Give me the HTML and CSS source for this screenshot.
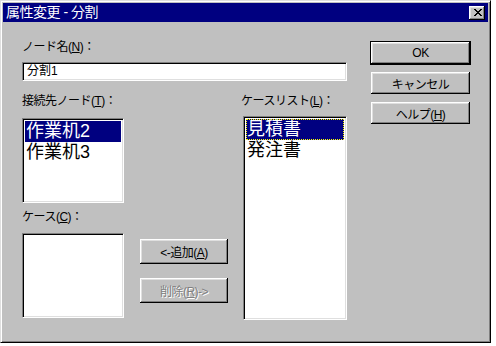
FILE: index.html
```html
<!DOCTYPE html>
<html lang="ja">
<head>
  <meta charset="UTF-8" />
  <title>属性変更 - 分割</title>
  <link rel="stylesheet" href="styles.css">
</head>
<body>
  <div class="dialog">
    <div class="titlebar">
      <span class="title">属性変更 - 分割</span>
      <span class="close" aria-label="閉じる">
        <svg width="8" height="7" viewBox="0 0 8 7">
          <path d="M0 0h2v1h1v1h2v-1h1v-1h2v1h-1v1h-1v1h-1v1h1v1h1v1h1v1h-2v-1h-1v-1h-2v1h-1v1h-2v-1h1v-1h1v-1h1v-1h-1v-1h-1v-1h-1z" fill="#000"/>
        </svg>
      </span>
    </div>

    <div class="body">
      <div class="main">
        <div class="label">ノード名(<u>N</u>)：</div>
        <div class="textbox">分割1</div>

        <div class="lists">
          <div class="col-left">
            <div class="label">接続先ノード(<u>T</u>)：</div>
            <div class="listbox list-nodes">
              <div class="item selected">作業机2</div>
              <div class="item">作業机3</div>
            </div>
            <div class="label label-cases">ケース(<u>C</u>)：</div>
            <div class="listbox list-cases"></div>
          </div>

          <div class="col-mid">
            <button class="btn btn-mid">&lt;-追加(<u>A</u>)</button>
            <button class="btn btn-mid" disabled>削除(<u>R</u>)-&gt;</button>
          </div>

          <div class="col-right">
            <div class="label">ケースリスト(<u>L</u>)：</div>
            <div class="listbox list-all">
              <div class="item selected focused">見積書</div>
              <div class="item">発注書</div>
            </div>
          </div>
        </div>
      </div>

      <div class="buttons">
        <button class="btn default">OK</button>
        <button class="btn">キャンセル</button>
        <button class="btn">ヘルプ(<u>H</u>)</button>
      </div>
    </div>
  </div>
</body>
</html>
```

FILE: styles.css
```css
/* Reset and basics */
* {
  box-sizing: border-box;
}
body {
  margin: 0;
  background: #fff;
  font-family: "Liberation Sans", "Noto Sans CJK JP", sans-serif;
  font-size: 12px;
  color: #000;
}

/* Window frame */
.dialog {
  width: 491px;
  height: 343px;
  background: #c0c0c0;
  border: 1px solid;
  border-color: #dfdfdf #000 #000 #dfdfdf;
  box-shadow: inset 1px 1px #fff, inset -1px -1px #808080;
  padding: 2px;
}

.titlebar {
  height: 19px;
  background: #000080;
  color: #fff;
  display: flex;
  align-items: center;
  justify-content: space-between;
  padding: 0 3px;
}
.title {
  font-size: 14px;
  line-height: 19px;
  letter-spacing: -0.5px;
}
.close {
  width: 16px;
  height: 14px;
  background: #c0c0c0;
  box-shadow: inset -1px -1px #000, inset 1px 1px #fff, inset -2px -2px #808080, inset 2px 2px #dfdfdf;
  display: flex;
  align-items: center;
  justify-content: center;
  padding-left: 1px;
}
.close svg {
  display: block;
}

/* Content */
.body {
  display: flex;
  padding: 18px 0 0 19px;
}
.main {
  width: 325px;
}
.label {
  height: 14px;
  line-height: 14px;
  white-space: nowrap;
  letter-spacing: -0.5px;
}
.textbox {
  margin-top: 8px;
  height: 19px;
  background: #fff;
  border: 1px solid;
  border-color: #808080 #fff #fff #808080;
  box-shadow: inset 1px 1px #000, inset -1px -1px #dfdfdf;
  padding: 1px 0 0 4px;
  line-height: 15px;
}

.lists {
  display: flex;
  margin-top: 13px;
}
.col-left {
  width: 102px;
}
.col-mid {
  width: 88px;
  margin-left: 16px;
  padding-top: 145px;
  display: flex;
  flex-direction: column;
  gap: 14px;
}
.col-right {
  width: 106px;
  margin-left: 13px;
}

.listbox {
  background: #fff;
  border: 1px solid;
  border-color: #808080 #fff #fff #808080;
  box-shadow: inset 1px 1px #000, inset -1px -1px #dfdfdf;
  padding: 2px;
}
.list-nodes {
  margin-top: 10px;
  height: 85px;
}
.label-cases {
  margin-top: 7px;
}
.list-cases {
  margin-top: 9px;
  height: 85px;
}
.list-all {
  margin: 8px 0 0 2px;
  width: 104px;
  height: 204px;
}
.item {
  height: 21px;
  line-height: 21px;
  font-size: 18px;
  padding-left: 1px;
  white-space: nowrap;
}
.item.selected {
  background: #000080;
  color: #fff;
}
.item.focused {
  outline: 1px dotted #ffff00;
  outline-offset: -1px;
}

/* Buttons */
.buttons {
  width: 101px;
  margin: 1px 0 0 23px;
  display: flex;
  flex-direction: column;
  align-items: center;
}
.btn {
  width: 99px;
  height: 22px;
  margin: 0;
  padding: 0;
  font: inherit;
  letter-spacing: -0.5px;
  color: #000;
  background: #c0c0c0;
  border: none;
  box-shadow: inset -1px -1px #000, inset 1px 1px #fff, inset -2px -2px #808080, inset 2px 2px #dfdfdf;
}
.btn.default {
  width: 101px;
  height: 24px;
  border: 1px solid #000;
  margin-bottom: 7px;
}
.buttons .btn:last-child {
  margin-top: 8px;
}
.btn-mid {
  width: 88px;
  height: 25px;
}
.btn:disabled {
  color: #808080;
  text-shadow: 1px 1px #fff;
}
```
